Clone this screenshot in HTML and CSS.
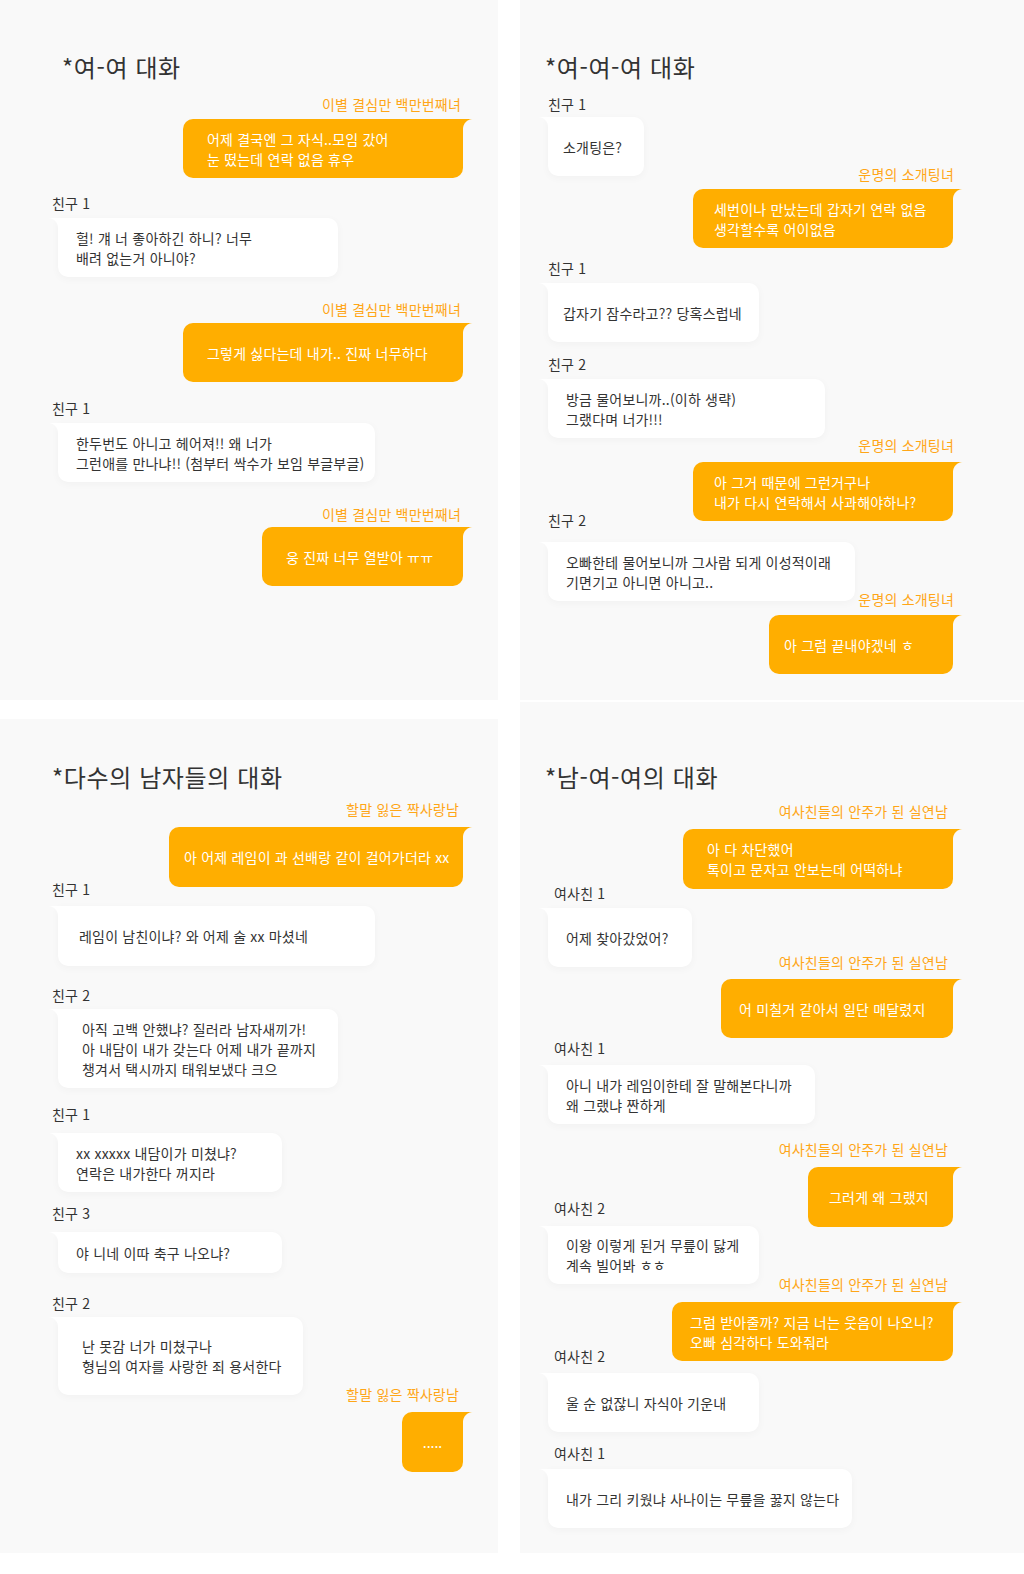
FILE: index.html
```html
<!DOCTYPE html>
<html lang="ko">
<head>
<meta charset="utf-8">
<title>대화 모음</title>
<link rel="stylesheet" href="styles.css">
</head>
<body>
<div class="page">
  <div class="col col-left">
    <section class="panel p1">
      <h2 class="title">*여-여 대화</h2>
      <div class="name me mt11">이별 결심만 백만번째녀</div>
      <div class="bubble me w280 pl25 mt5"><p>어제 결국엔 그 자식..모임 갔어<br>눈 떴는데 연락 없음 휴우</p></div>
      <div class="name you mt15">친구 1</div>
      <div class="bubble you w280 pl19 mt5"><p>헐! 걔 너 좋아하긴 하니? 너무<br>배려 없는거 아니야?</p></div>
      <div class="name me mt22">이별 결심만 백만번째녀</div>
      <div class="bubble me w280 pl25 mt4"><p>그렇게 싫다는데 내가.. 진짜 너무하다</p></div>
      <div class="name you mt16">친구 1</div>
      <div class="bubble you w317 pl19 mt5"><p>한두번도 아니고 헤어져!! 왜 너가<br>그런애를 만나냐!! (첨부터 싹수가 보임 부글부글)</p></div>
      <div class="name me mt22">이별 결심만 백만번째녀</div>
      <div class="bubble me w201 pl25 mt3"><p>웅 진짜 너무 열받아 ㅠㅠ</p></div>
    </section>
    <section class="panel p3">
      <h2 class="title">*다수의 남자들의 대화</h2>
      <div class="name me mt6">할말 잃은 짝사랑남</div>
      <div class="bubble me w294 pl16 mt8 h60"><p>아 어제 레임이 과 선배랑 같이 걸어가더라 xx</p></div>
      <div class="name you mtn8">친구 1</div>
      <div class="bubble you w317 pl22 mt7 h60"><p>레임이 남친이냐? 와 어제 술 xx 마셨네</p></div>
      <div class="name you mt19">친구 2</div>
      <div class="bubble you w280 pl25 mt4 h79"><p>아직 고백 안했냐? 질러라 남자새끼가!<br>아 내담이 내가 갖는다 어제 내가 끝까지<br>챙겨서 택시까지 태워보냈다 크으</p></div>
      <div class="name you mt16">친구 1</div>
      <div class="bubble you w224 pl19 mt9"><p>xx xxxxx 내담이가 미쳤냐?<br>연락은 내가한다 꺼지라</p></div>
      <div class="name you mt11">친구 3</div>
      <div class="bubble you w224 pl19 mt9 h41"><p>야 니네 이따 축구 나오냐?</p></div>
      <div class="name you mt20">친구 2</div>
      <div class="bubble you w245 pl25 mt4 h78"><p>난 못감 너가 미쳤구나<br>형님의 여자를 사랑한 죄 용서한다</p></div>
      <div class="name me mtn11">할말 잃은 짝사랑남</div>
      <div class="bubble me w61 center mt8 h60"><p class="dots">.....</p></div>
    </section>
  </div>
  <div class="col col-right">
    <section class="panel p2">
      <h2 class="title">*여-여-여 대화</h2>
      <div class="name you mt11">친구 1</div>
      <div class="bubble you w96 pl16 mt3"><p>소개팅은?</p></div>
      <div class="name me mtn12">운명의 소개팅녀</div>
      <div class="bubble me w260 pl22 mt5"><p>세번이나 만났는데 갑자기 연락 없음<br>생각할수록 어이없음</p></div>
      <div class="name you mt10">친구 1</div>
      <div class="bubble you w211 pl16 mt5"><p>갑자기 잠수라고?? 당혹스럽네</p></div>
      <div class="name you mt12">친구 2</div>
      <div class="bubble you w277 pl19 mt5"><p>방금 물어보니까..(이하 생략)<br>그랬다며 너가!!!</p></div>
      <div class="name me mtn3">운명의 소개팅녀</div>
      <div class="bubble me w260 pl22 mt7"><p>아 그거 때문에 그런거구나<br>내가 다시 연락해서 사과해야하나?</p></div>
      <div class="name you mtn11">친구 2</div>
      <div class="bubble you w307 pl19 mt12"><p>오빠한테 물어보니까 그사람 되게 이성적이래<br>기면기고 아니면 아니고..</p></div>
      <div class="name me mtn12">운명의 소개팅녀</div>
      <div class="bubble me w184 pl16 mt6"><p>아 그럼 끝내야겠네 ㅎ</p></div>
    </section>
    <section class="panel p4">
      <h2 class="title">*남-여-여의 대화</h2>
      <div class="name me mt8">여사친들의 안주가 된 실연남</div>
      <div class="bubble me w270 pl25 mt8 h60"><p>아 다 차단했어<br>톡이고 문자고 안보는데 어떡하냐</p></div>
      <div class="name you mtn6">여사친 1</div>
      <div class="bubble you w144 pl19 mt5"><p>어제 찾아갔었어?</p></div>
      <div class="name me mtn15">여사친들의 안주가 된 실연남</div>
      <div class="bubble me w232 pl19 mt7"><p>어 미칠거 같아서 일단 매달렸지</p></div>
      <div class="name you mt0">여사친 1</div>
      <div class="bubble you w267 pl19 mt7"><p>아니 내가 레임이한테 잘 말해본다니까<br>왜 그랬냐 짠하게</p></div>
      <div class="name me mt15">여사친들의 안주가 된 실연남</div>
      <div class="bubble me w145 pl22 mt8 h60"><p>그러게 왜 그랬지</p></div>
      <div class="name you mtn29">여사친 2</div>
      <div class="bubble you w211 pl19 mt8 h58"><p>이왕 이렇게 된거 무릎이 닳게<br>계속 빌어봐 ㅎㅎ</p></div>
      <div class="name me mtn10">여사친들의 안주가 된 실연남</div>
      <div class="bubble me w281 pl19 mt8"><p>그럼 받아줄까? 지금 너는 웃음이 나오니?<br>오빠 심각하다 도와줘라</p></div>
      <div class="name you mtn15">여사친 2</div>
      <div class="bubble you w211 pl19 mt7"><p>울 순 없잖니 자식아 기운내</p></div>
      <div class="name you mt11">여사친 1</div>
      <div class="bubble you w304 pl19 mt6"><p>내가 그리 키웠냐 사나이는 무릎을 꿇지 않는다</p></div>
    </section>
  </div>
</div>
</body>
</html>
```

FILE: styles.css
```css
* { box-sizing: border-box; }

html, body {
  margin: 0;
  padding: 0;
  background: #ffffff;
}

body {
  font-family: "Noto Sans CJK KR", "Noto Sans", sans-serif;
  color: #333333;
  font-size: 14px;
  line-height: 20px;
}

.page {
  display: flex;
  gap: 22px;
  width: 1024px;
}

.col {
  display: flex;
  flex-direction: column;
}

.col-left { width: 498px; gap: 19px; }
.col-right { width: 504px; gap: 2px; }

.panel {
  background: #f9f9f9;
  display: flex;
  flex-direction: column;
  align-items: flex-start;
}

.p1 { height: 700px; padding-top: 51px; --title-left: 62px; --you-name: 52px; --you-bubble: 58px; --me-name: 37px; --me-bubble: 35px; }
.p2 { height: 700px; padding-top: 51px; --title-left: 25px; --you-name: 28px; --you-bubble: 28px; --me-name: 70px; --me-bubble: 71px; }
.p3 { height: 834px; padding-top: 42px; --title-left: 52px; --you-name: 52px; --you-bubble: 58px; --me-name: 39px; --me-bubble: 35px; }
.p4 { height: 851px; padding-top: 59px; --title-left: 25px; --you-name: 34px; --you-bubble: 28px; --me-name: 76px; --me-bubble: 71px; }

.title {
  margin: 0 0 0 var(--title-left);
  font-size: 24px;
  line-height: 32px;
  font-weight: 400;
  letter-spacing: 0.6px;
  color: #333333;
}

.name {
  font-size: 14px;
  line-height: 20px;
  height: 20px;
  white-space: nowrap;
  letter-spacing: 0.2px;
}

.name.you { margin-left: var(--you-name); color: #333333; }
.name.me { align-self: flex-end; margin-right: var(--me-name); color: #ffa617; }

.bubble {
  position: relative;
  display: flex;
  align-items: center;
  height: 59px;
  border-radius: 10px;
  padding-left: 20px;
  padding-right: 10px;
}

.bubble p {
  margin: 0;
  font-size: 14px;
  line-height: 20px;
  letter-spacing: 0.2px;
  white-space: nowrap;
}

.bubble.you {
  margin-left: var(--you-bubble);
  background: #ffffff;
  color: #333333;
  border-top-left-radius: 0;
  box-shadow: 0 2px 8px rgba(0, 0, 0, 0.035);
}

.bubble.you::before {
  content: "";
  position: absolute;
  top: 0;
  left: -10px;
  width: 10px;
  height: 10px;
  background: radial-gradient(circle at 0 100%, transparent 9.5px, #ffffff 10.5px);
}

.bubble.me {
  align-self: flex-end;
  margin-right: var(--me-bubble);
  background: #ffae00;
  color: #ffffff;
  border-top-right-radius: 0;
}

.bubble.me::after {
  content: "";
  position: absolute;
  top: 0;
  right: -10px;
  width: 10px;
  height: 10px;
  background: radial-gradient(circle at 100% 100%, transparent 9.5px, #ffae00 10.5px);
}

.bubble.center { justify-content: center; padding: 0; }
.dots { font-size: 12px; }
.bubble p.dots { letter-spacing: 0; }

/* bubble heights */
.h41 { height: 41px; }
.h58 { height: 58px; }
.h60 { height: 60px; }
.h78 { height: 78px; }
.h79 { height: 79px; }

/* bubble widths */
.w61 { width: 61px; }
.w96 { width: 96px; }
.w144 { width: 144px; }
.w145 { width: 145px; }
.w184 { width: 184px; }
.w201 { width: 201px; }
.w211 { width: 211px; }
.w224 { width: 224px; }
.w232 { width: 232px; }
.w245 { width: 245px; }
.w260 { width: 260px; }
.w267 { width: 267px; }
.w270 { width: 270px; }
.w277 { width: 277px; }
.w280 { width: 280px; }
.w281 { width: 281px; }
.w294 { width: 294px; }
.w304 { width: 304px; }
.w307 { width: 307px; }
.w317 { width: 317px; }

/* text inset */
.pl16 { padding-left: 15px; }
.pl19 { padding-left: 18px; }
.pl22 { padding-left: 21px; }
.pl25 { padding-left: 24px; }

/* vertical rhythm */
.mt0 { margin-top: 0; }
.mt3 { margin-top: 3px; }
.mt4 { margin-top: 4px; }
.mt5 { margin-top: 5px; }
.mt6 { margin-top: 6px; }
.mt7 { margin-top: 7px; }
.mt8 { margin-top: 8px; }
.mt9 { margin-top: 9px; }
.mt10 { margin-top: 10px; }
.mt11 { margin-top: 11px; }
.mt12 { margin-top: 12px; }
.mt15 { margin-top: 15px; }
.mt16 { margin-top: 16px; }
.mt19 { margin-top: 19px; }
.mt20 { margin-top: 20px; }
.mt22 { margin-top: 22px; }
.mtn3 { margin-top: -3px; }
.mtn6 { margin-top: -6px; }
.mtn8 { margin-top: -8px; }
.mtn10 { margin-top: -10px; }
.mtn11 { margin-top: -11px; }
.mtn12 { margin-top: -12px; }
.mtn15 { margin-top: -15px; }
.mtn29 { margin-top: -29px; }
```
